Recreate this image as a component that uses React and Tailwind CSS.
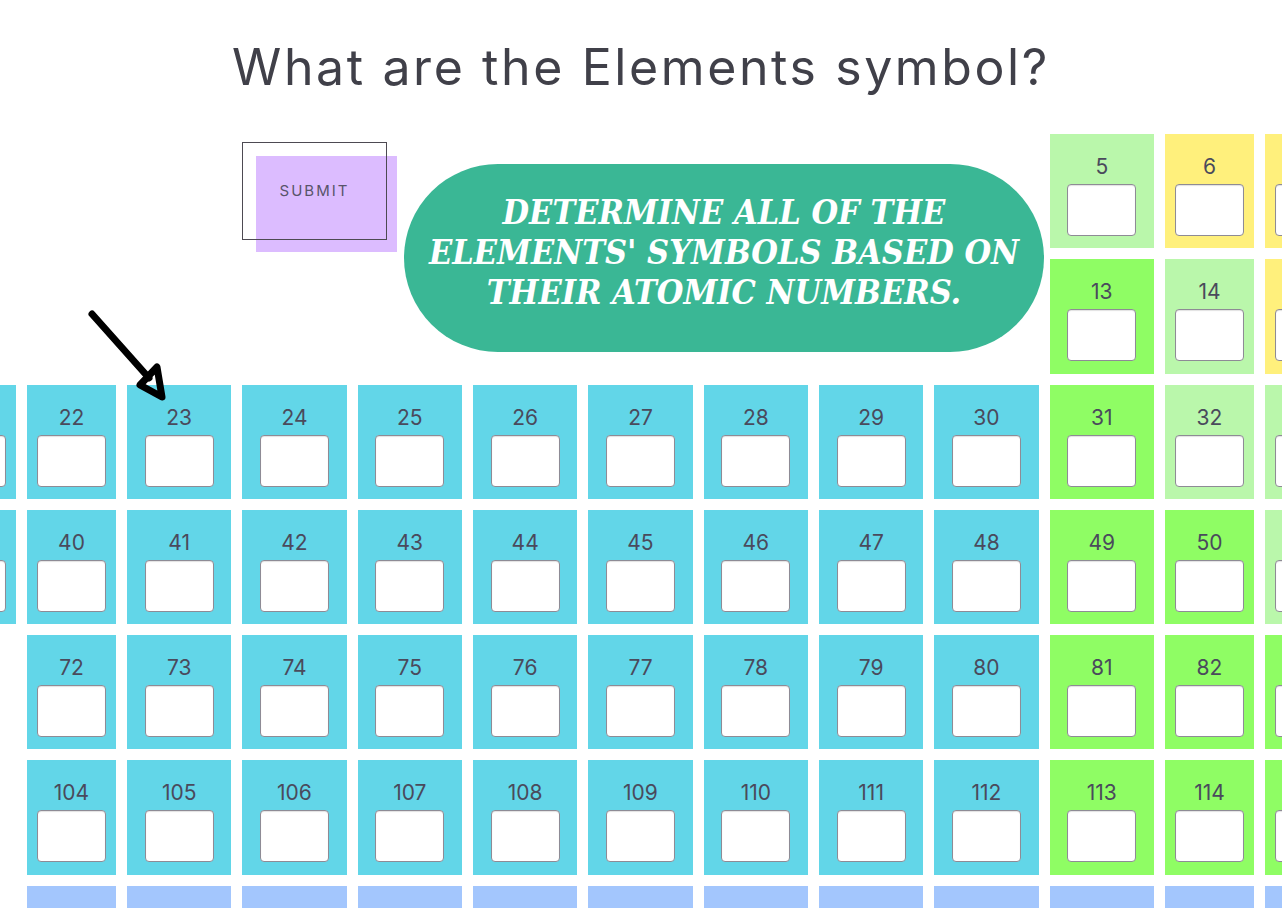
const cyan = "bg-[#62d6e8]"
const green = "bg-[#8ffd64]"
const light = "bg-[#baf7ab]"
const yellow = "bg-[#fff07c]"
const blue = "bg-[#a3c6fd]"

// 13 visible columns, 7 visible rows
const rows = [
  { 10: [5, light], 11: [6, yellow], 12: [7, yellow] },
  { 10: [13, green], 11: [14, light], 12: [15, yellow] },
  {
    0: [21, cyan], 1: [22, cyan], 2: [23, cyan], 3: [24, cyan], 4: [25, cyan], 5: [26, cyan], 6: [27, cyan],
    7: [28, cyan], 8: [29, cyan], 9: [30, cyan], 10: [31, green], 11: [32, light], 12: [33, light],
  },
  {
    0: [39, cyan], 1: [40, cyan], 2: [41, cyan], 3: [42, cyan], 4: [43, cyan], 5: [44, cyan], 6: [45, cyan],
    7: [46, cyan], 8: [47, cyan], 9: [48, cyan], 10: [49, green], 11: [50, green], 12: [51, light],
  },
  {
    1: [72, cyan], 2: [73, cyan], 3: [74, cyan], 4: [75, cyan], 5: [76, cyan], 6: [77, cyan],
    7: [78, cyan], 8: [79, cyan], 9: [80, cyan], 10: [81, green], 11: [82, green], 12: [83, green],
  },
  {
    1: [104, cyan], 2: [105, cyan], 3: [106, cyan], 4: [107, cyan], 5: [108, cyan], 6: [109, cyan],
    7: [110, cyan], 8: [111, cyan], 9: [112, cyan], 10: [113, green], 11: [114, green], 12: [115, green],
  },
  {
    1: [58, blue], 2: [59, blue], 3: [60, blue], 4: [61, blue], 5: [62, blue], 6: [63, blue],
    7: [64, blue], 8: [65, blue], 9: [66, blue], 10: [67, blue], 11: [68, blue], 12: [69, blue],
  },
]

function Tile({ num, color, col, row }) {
  return (
    <div
      className={`${color} flex flex-col items-center pt-[21px]`}
      style={{ gridColumn: col + 1, gridRow: row + 1 }}
    >
      <span className="text-[21px] leading-[24px] text-[#4a4a5c]" style={{ fontFamily: "Inter, sans-serif" }}>
        {num}
      </span>
      <input
        type="text"
        aria-label={`Element ${num}`}
        className="mt-[5px] w-[69px] h-[52px] bg-white border border-[#8e8b95] rounded-[4px] shadow-[inset_0_1px_1px_rgba(0,0,0,0.12)] outline-none"
      />
    </div>
  )
}

export default function App() {
  return (
    <div className="relative w-full h-[908px] overflow-hidden bg-white">
      <header className="h-[134px] flex items-center justify-center">
        <h1
          className="text-[50px] leading-none text-[#404049] tracking-[2.6px]"
          style={{ fontFamily: "Inter, sans-serif" }}
        >
          What are the Elements symbol?
        </h1>
      </header>

      <div className="ml-[-73px] grid w-max grid-cols-[89px_89px_repeat(9,104.33px)_89px_89px] grid-rows-[repeat(7,114.3px)] gap-[11px]">
        <div className="col-start-2 col-end-11 row-start-1 row-end-3 flex items-start">
          <div className="relative mt-[22px] ml-[229px] w-[141px] h-[96px] bg-[#dcbcff] shrink-0">
            <button
              className="absolute -left-[14px] -top-[14px] w-[145px] h-[98px] border-[1.5px] border-[#4d4a52] flex items-center justify-center text-[15px] tracking-[2px] text-[#58546a]"
              style={{ fontFamily: "Inter, sans-serif" }}
            >
              SUBMIT
            </button>
          </div>
          <div className="mt-[30px] ml-[7px] w-[640px] h-[188px] shrink-0 rounded-full bg-[#3ab795] flex items-center justify-center pb-[12px]">
            <p
              className="text-center text-white italic font-bold uppercase text-[34px] leading-[40px] font-stretch-condensed whitespace-nowrap"
              style={{ fontFamily: '"DejaVu Serif Condensed", "DejaVu Serif", serif' }}
            >
              Determine all of the
              <br />
              elements' symbols based on
              <br />
              their atomic numbers.
            </p>
          </div>
        </div>

        {rows.map((r, ri) =>
          Object.entries(r).map(([c, [num, color]]) => (
            <Tile key={`${ri}-${c}`} num={num} color={color} col={Number(c)} row={ri} />
          ))
        )}
      </div>

      {/* hand-drawn arrow pointing at 23 */}
      <svg className="absolute left-0 top-0 pointer-events-none" width="200" height="420" viewBox="0 0 200 420">
        <path d="M92 314 L149 378" stroke="#000" strokeWidth="7" strokeLinecap="round" fill="none" />
        <path d="M140 385 L157 367 L162 397 Z" stroke="#000" strokeWidth="7" strokeLinejoin="round" fill="none" />
      </svg>
    </div>
  )
}
